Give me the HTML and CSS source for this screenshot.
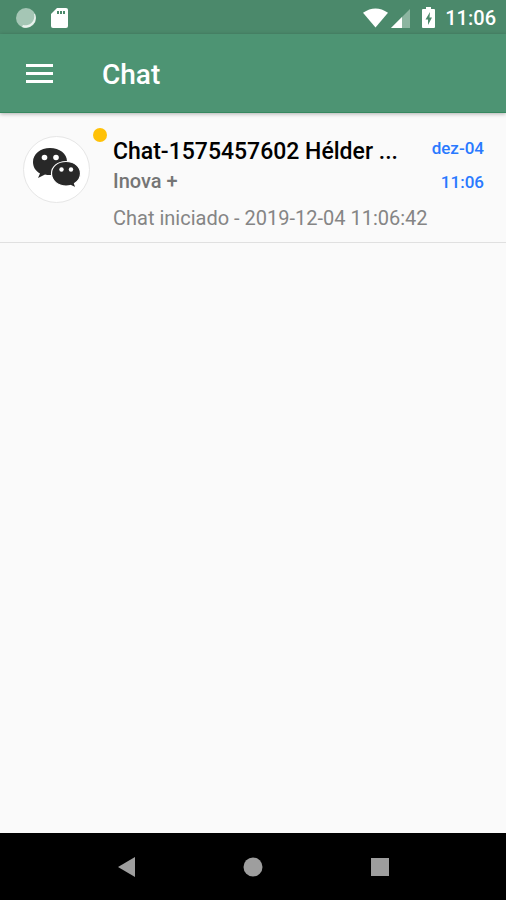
FILE: index.html
```html
<!DOCTYPE html>
<html lang="pt">
<head>
    <meta charset="UTF-8">
    <meta name="viewport" content="width=device-width, initial-scale=1.0">
    <title>Chat</title>
    <link rel="stylesheet" href="styles.css">
</head>
<body>
    <!-- Status bar -->
    <div class="status-bar">
        <div class="status-left">
            <svg width="20" height="20" viewBox="0 0 20 20">
                <circle cx="10" cy="10" r="10" fill="#a5c6b5"/>
                <path d="M19 6a10 10 0 0 1-13 13l1-2a9 9 0 0 0 11-11z" fill="#e9f2ed"/>
            </svg>
            <svg width="17" height="20" viewBox="0 0 17 20">
                <path d="M6 0h9a2 2 0 0 1 2 2v16a2 2 0 0 1-2 2H2a2 2 0 0 1-2-2V6z" fill="#fff"/>
                <path d="M6 3h2v3H6zM9 3h2v3H9zM12 3h2v3h-2z" fill="#4b896b"/>
            </svg>
        </div>
        <div class="status-right">
            <svg class="wifi" width="25" height="20" viewBox="0 0 26 20">
                <path d="M0 4.500Q13-4.500 26 4.500L13 20z" fill="#fff"/>
            </svg>
            <svg class="signal" width="19" height="20" viewBox="0 0 19 20">
                <path d="M0 20L19 1v19z" fill="#8cb5a0"/>
                <path d="M0 20L11 9v11z" fill="#fff"/>
            </svg>
            <svg class="battery" width="13" height="21" viewBox="0 0 13 21">
                <path d="M4 0h5v2h3a1 1 0 0 1 1 1v17a1 1 0 0 1-1 1H1a1 1 0 0 1-1-1V3a1 1 0 0 1 1-1h3z" fill="#fff"/>
                <path d="M8 5L3.500 12.500H6V18l4-7.500H7.500z" fill="#4b896b"/>
            </svg>
            <span>11:06</span>
        </div>
    </div>

    <!-- Toolbar -->
    <header class="toolbar">
        <button class="menu-button" type="button" aria-label="Menu">
            <svg width="27" height="22" viewBox="0 0 27 22">
                <path d="M0 0h27v3H0zM0 8h27v3H0zM0 16h27v3H0z" fill="#fff"/>
            </svg>
        </button>
        <h1>Chat</h1>
    </header>

    <!-- Chat list -->
    <main class="chat-list">
        <a class="chat-item" href="#">
            <div class="avatar">
                <svg width="48" height="40" viewBox="0 0 48 40">
                    <path d="M17 0C7.500 0 0 6 0 14c0 5 2.500 9 7 11.500L5 30l7-3.500c1.500.4 3 .5 5 .5 9.500 0 17-5.500 17-13.500S26.500 0 17 0z" fill="#282828"/>
                    <path d="M33 13.500c-8.300 0-14.500 5-14.500 12S24.700 38 33 38c1.500 0 3-.1 4.500-.5L43 40l-1.500-4.500c3.700-2.300 6-5.700 6-10 0-7-6.200-12-14.500-12z" fill="#282828" stroke="#fff" stroke-width="1.200"/>
                    <g fill="#fff">
                        <circle cx="11.500" cy="9.500" r="2.800"/>
                        <circle cx="23" cy="9.500" r="2.800"/>
                        <circle cx="28.500" cy="21.500" r="2.200"/>
                        <circle cx="38" cy="21.500" r="2.200"/>
                    </g>
                </svg>
                <span class="badge"></span>
            </div>
            <div class="chat-text">
                <div class="chat-name">Chat-1575457602 Hélder ...</div>
                <div class="chat-company">Inova +</div>
                <div class="chat-message">Chat iniciado - 2019-12-04 11:06:42</div>
            </div>
            <div class="chat-date">
                <div>dez-04</div>
                <div>11:06</div>
            </div>
        </a>
    </main>

    <!-- Navigation bar -->
    <nav class="nav-bar">
        <button type="button" aria-label="Back">
            <svg width="18" height="20" viewBox="0 0 18 20"><path d="M0 10L17 0v20z" fill="#9e9e9e"/></svg>
        </button>
        <button type="button" aria-label="Home">
            <svg width="20" height="20" viewBox="0 0 20 20"><circle cx="10" cy="10" r="9.500" fill="#9e9e9e"/></svg>
        </button>
        <button type="button" aria-label="Recent apps">
            <svg width="18" height="18" viewBox="0 0 18 18"><path d="M0 0h18v18H0z" fill="#9e9e9e"/></svg>
        </button>
    </nav>
</body>
</html>
```
FILE: styles.css
```css
/* General styles */
* {
    box-sizing: border-box;
}
body {
    font-family: Roboto, "Liberation Sans", sans-serif;
    margin: 0;
    min-height: 100vh;
    display: flex;
    flex-direction: column;
    background-color: #fafafa;
}
svg {
    display: block;
}
button {
    background: none;
    border: none;
    padding: 0;
    cursor: pointer;
}

/* Status bar */
.status-bar {
    display: flex;
    justify-content: space-between;
    align-items: center;
    height: 34px;
    padding: 1px 10px 0 16px;
    background-color: #4b896b;
    color: #fff;
    font-size: 20px;
    font-weight: 500;
}
.status-left,
.status-right {
    display: flex;
    align-items: center;
}
.status-left {
    gap: 15px;
}
.signal {
    margin-left: 3px;
}
.battery {
    margin: 0 10px 0 12px;
}

/* Toolbar */
.toolbar {
    display: flex;
    align-items: center;
    height: 79px;
    padding: 4px 26px 0;
    gap: 49px;
    background-color: #4d9473;
    border-bottom: 1px solid #36885f;
    box-shadow: 0 1px 4px rgba(0, 0, 0, 0.3);
    color: #fff;
}
.toolbar h1 {
    margin: 0;
    font-size: 28px;
    font-weight: 500;
    line-height: 34px;
}

/* Chat list */
.chat-list {
    flex: 1;
}
.chat-item {
    display: flex;
    padding: 23px 22px 10px 23px;
    border-bottom: 1px solid #e0e0e0;
    color: #757575;
    text-decoration: none;
}
.avatar {
    position: relative;
    display: flex;
    align-items: center;
    justify-content: center;
    flex: none;
    width: 67px;
    height: 67px;
    padding-bottom: 4px;
    border: 1px solid #e6e6e6;
    border-radius: 50%;
    background-color: #fff;
}
.badge {
    position: absolute;
    top: -9px;
    right: -18px;
    width: 14px;
    height: 14px;
    border-radius: 50%;
    background-color: #ffc107;
}
.chat-text {
    flex: 1;
    min-width: 0;
    margin-left: 23px;
    font-size: 20px;
}
.chat-name {
    color: #000;
    font-size: 23px;
    font-weight: 500;
    line-height: 32px;
    white-space: nowrap;
    overflow: hidden;
    text-overflow: ellipsis;
}
.chat-company {
    font-weight: 500;
    line-height: 26px;
}
.chat-message {
    margin-top: 10px;
    color: #858585;
    line-height: 28px;
    white-space: nowrap;
}
.chat-date {
    color: #2979ff;
    font-size: 17px;
    font-weight: 500;
    line-height: 34px;
    margin-top: -5px;
    text-align: right;
}

/* Navigation bar */
.nav-bar {
    display: flex;
    height: 67px;
    padding: 0 12.5%;
    background-color: #000;
}
.nav-bar button {
    flex: 1;
    display: flex;
    align-items: center;
    justify-content: center;
}
```
